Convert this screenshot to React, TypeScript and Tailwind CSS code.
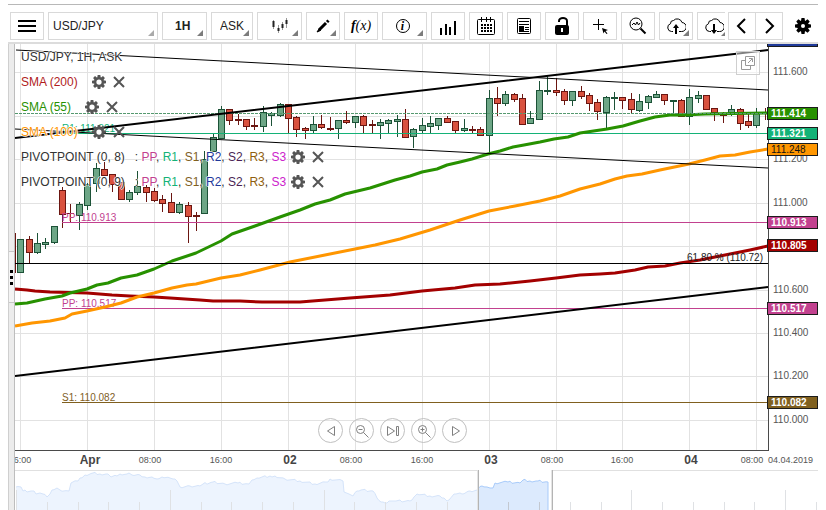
import type { ReactNode } from 'react';

type Point = [number, number];
// up, body top, body bottom, wick top, wick bottom
type Candle = [boolean, number, number, number, number];

const U = true;
const D = false;

const candles: Candle[] = [
  [U, 239, 273, 239, 273], [D, 239, 253, 236, 263], [U, 243, 253, 233, 254], [U, 242, 245, 238, 249],
  [U, 226, 243, 226, 244], [D, 190, 215, 187, 228], [D, 213, 214, 204, 222], [U, 204, 216, 202, 230],
  [U, 184, 206, 183, 210], [U, 168, 184, 163, 192], [D, 169, 176, 162, 176], [D, 174, 185, 174, 192],
  [D, 182, 200, 182, 200], [U, 192, 200, 190, 202], [U, 186, 193, 171, 195], [D, 187, 193, 185, 202],
  [D, 191, 201, 188, 202], [D, 199, 204, 195, 212], [D, 202, 213, 193, 213], [U, 204, 213, 202, 214],
  [D, 205, 217, 202, 243], [D, 215, 217, 212, 231], [U, 159, 214, 151, 214], [U, 137, 152, 134, 152],
  [U, 109, 139, 106, 139], [D, 109, 121, 109, 125], [D, 119, 121, 114, 125], [D, 119, 127, 119, 130],
  [D, 125, 127, 118, 130], [U, 112, 127, 106, 132], [U, 113, 116, 112, 126], [U, 104, 116, 103, 117],
  [D, 104, 119, 104, 133], [D, 117, 130, 116, 137], [D, 128, 131, 127, 139], [U, 124, 131, 116, 133],
  [D, 124, 128, 115, 129], [D, 128, 130, 117, 131], [U, 120, 129, 120, 139], [D, 120, 123, 111, 124],
  [U, 116, 123, 116, 128], [D, 116, 126, 115, 134], [D, 124, 126, 120, 133], [U, 122, 126, 119, 139],
  [U, 120, 124, 119, 133], [U, 119, 122, 115, 137], [D, 119, 138, 109, 138], [U, 129, 137, 128, 148],
  [U, 125, 131, 118, 133], [U, 123, 127, 116, 133], [U, 118, 126, 118, 130], [D, 118, 123, 116, 123],
  [D, 121, 131, 121, 134], [U, 128, 131, 119, 132], [D, 129, 131, 126, 133], [D, 129, 136, 127, 136],
  [U, 98, 136, 90, 153], [D, 98, 104, 87, 116], [U, 94, 104, 91, 106], [D, 94, 100, 93, 102],
  [D, 98, 125, 94, 125], [U, 118, 124, 111, 124], [U, 90, 120, 81, 120], [U, 90, 92, 76, 95],
  [D, 90, 93, 78, 96], [D, 91, 101, 89, 105], [U, 91, 101, 91, 106], [D, 91, 97, 86, 99],
  [D, 95, 104, 93, 111], [D, 102, 112, 99, 120], [U, 97, 113, 96, 128], [U, 97, 99, 92, 110],
  [D, 97, 101, 97, 109], [D, 99, 110, 93, 113], [U, 101, 111, 94, 112], [U, 96, 103, 95, 109],
  [U, 94, 98, 91, 98], [D, 94, 101, 94, 105], [U, 100, 102, 100, 113], [D, 100, 117, 99, 117],
  [U, 97, 117, 89, 125], [U, 95, 99, 91, 103], [D, 95, 110, 95, 110], [D, 108, 113, 108, 121],
  [D, 113, 116, 112, 123], [U, 109, 113, 105, 116], [D, 109, 124, 108, 130], [D, 121, 126, 113, 128],
  [U, 112, 126, 108, 128], [D, 112, 114, 108, 120],
];

const sma200: Point[] = [
  [15, 289], [27, 290], [35, 291], [50, 292], [87, 293], [112, 295], [130, 296], [154, 297], [170, 298],
  [200, 300], [213, 301], [240, 301], [262, 302], [300, 302], [325, 300], [350, 298], [390, 295], [422, 291],
  [455, 288], [475, 285], [500, 284], [530, 281], [556, 278], [580, 275], [600, 274], [615, 273], [635, 270],
  [648, 267], [665, 266], [680, 263], [700, 260], [720, 256], [735, 253], [750, 250], [768, 246],
];
const sma55: Point[] = [
  [15, 304], [27, 303], [45, 299], [62, 296], [70, 293], [87, 289], [97, 285], [108, 283], [121, 278],
  [137, 275], [154, 269], [172, 261], [196, 253], [221, 241], [232, 234], [255, 226], [280, 217], [300, 210],
  [315, 204], [330, 200], [345, 194], [370, 188], [395, 180], [410, 176], [422, 172], [437, 169], [447, 165],
  [460, 162], [472, 159], [488, 154], [500, 151], [513, 147], [524, 145], [540, 142], [554, 139], [568, 137],
  [580, 133], [607, 129], [623, 126], [640, 121], [655, 117], [670, 115], [685, 115], [705, 114], [768, 113],
];
const sma100: Point[] = [
  [15, 326], [32, 323], [50, 321], [65, 318], [72, 314], [87, 311], [105, 307], [121, 303], [137, 297],
  [154, 293], [172, 288], [187, 285], [196, 284], [221, 278], [240, 275], [260, 270], [290, 262], [325, 255],
  [355, 249], [375, 245], [400, 239], [430, 230], [460, 220], [489, 211], [515, 206], [540, 201], [560, 196],
  [580, 189], [600, 184], [615, 179], [627, 176], [642, 174], [660, 170], [689, 164], [705, 160], [720, 156],
  [735, 155], [750, 152], [768, 149],
];

const overview: Point[] = [
  [16, 487], [21, 487], [23, 491], [34, 491], [36, 494], [43, 494], [47, 497], [50, 494], [52, 490], [57, 488],
  [60, 490], [69, 491], [71, 483], [78, 481], [80, 478], [85, 475], [93, 473], [100, 474], [108, 474],
  [111, 477], [117, 476], [120, 474], [127, 474], [129, 473], [132, 475], [140, 475], [145, 477], [152, 477],
  [157, 479], [162, 477], [170, 478], [173, 479], [177, 481], [180, 487], [190, 486], [200, 486], [203, 484],
  [213, 482], [225, 484], [238, 483], [249, 484], [252, 480], [257, 478], [270, 476], [275, 476], [285, 479],
  [300, 481], [315, 484], [325, 482], [328, 482], [330, 479], [343, 481], [344, 492], [349, 494], [353, 496],
  [357, 491], [361, 490], [373, 491], [377, 498], [381, 502], [385, 503], [389, 501], [394, 501], [410, 501],
  [414, 497], [417, 494], [430, 496], [440, 496], [444, 498], [447, 501], [449, 500], [454, 494], [462, 494],
  [470, 491], [478, 490],
];
const selection: Point[] = [
  [478, 489], [482, 486], [487, 487], [490, 488], [493, 488], [495, 483], [508, 482], [520, 483], [523, 480],
  [530, 481], [538, 481], [548, 482],
];

const toLine = (pts: Point[]) => pts.map((p) => p.join(',')).join(' ');

// Splits long segments into short steps so that the overview reads as tick data.
function ragged(pts: Point[]): Point[] {
  const out: Point[] = [];
  pts.forEach(([x, y], i) => {
    out.push([x, y]);
    const next = pts[i + 1];
    if (!next) return;
    for (let sx = x + 2; sx < next[0] - 1; sx += 2) {
      const base = y + ((next[1] - y) * (sx - x)) / (next[0] - x);
      out.push([sx, base + (((sx * 7) % 5) - 2) / 2]);
    }
  });
  return out;
}

const gridX = [20, 87, 154, 221, 288, 355, 422, 489, 556, 622, 689, 756];
const gridY = [72, 116, 159, 203, 246, 290, 333, 376, 420];
const priceTicks: [number, string][] = [
  [72, '111.600'], [159, '111.200'], [203, '111.000'], [290, '110.600'], [333, '110.400'], [376, '110.200'], [420, '110.000'],
];
const timeTicks: [number, string, boolean][] = [
  [20, '16:00', false], [90, 'Apr', true], [150, '08:00', false], [221, '16:00', false], [290, '02', true],
  [351, '08:00', false], [422, '16:00', false], [491, '03', true], [552, '08:00', false], [622, '16:00', false],
  [691, '04', true], [752, '08:00', false],
];
const priceTags: { top: number; label: string; fill: string; dark?: boolean }[] = [
  { top: 34, label: '111.755', fill: '#1f3a9a' },
  { top: 107, label: '111.414', fill: '#279100' },
  { top: 127, label: '111.321', fill: '#14b277' },
  { top: 143, label: '111.248', fill: '#ff9600', dark: true },
  { top: 216, label: '110.913', fill: '#c2418f' },
  { top: 239, label: '110.805', fill: '#a30000' },
  { top: 302, label: '110.517', fill: '#c2418f' },
  { top: 396, label: '110.082', fill: '#80601f' },
];
const pivots: { y: number; label: string; color: string }[] = [
  { y: 133, label: 'R1: 111.321', color: '#14b277' },
  { y: 222, label: 'PP: 110.913', color: '#c2418f' },
  { y: 308, label: 'PP: 110.517', color: '#c2418f' },
  { y: 402, label: 'S1: 110.082', color: '#80601f' },
];

function Chart() {
  return (
    <svg
      viewBox="15 44 803 466"
      className="block h-auto w-full font-['Liberation_Sans',Arial,sans-serif]"
      role="img"
      aria-label="USD/JPY hourly chart"
    >
      {gridX.map((x) => <rect key={x} x={x} y={44} width={1} height={406} fill="#e2e2e2" />)}
      {gridY.map((y) => <rect key={y} x={15} y={y} width={753} height={1} fill="#e2e2e2" />)}

      <rect x={15} y={233} width={1} height={40} fill="#6b1611" />
      {candles.map(([up, top, bottom, high, low], i) => {
        const x = Math.round(20.25 + i * 8.364);
        const edge = up ? '#1c5237' : '#6b1611';
        const width = Math.min(7, 768 - x + 3);
        return (
          <g key={i}>
            <rect x={x} y={high} width={1} height={low - high} fill={edge} />
            <rect x={x - 3} y={top} width={width} height={bottom - top} fill={edge} />
            {bottom - top > 2 && (
              <rect x={x - 2} y={top + 1} width={width - 2} height={bottom - top - 2} fill={up ? '#6da686' : '#d9523f'} />
            )}
          </g>
        );
      })}

      {pivots.map((p) => (
        <g key={p.y} fill={p.color}>
          <rect x={62} y={p.y} width={706} height={1} />
          <text x={62} y={p.y - 1} fontSize={10}>{p.label}</text>
        </g>
      ))}

      <g fill="none" strokeWidth={3} strokeLinejoin="round">
        <polyline points={toLine(sma200)} stroke="#a30000" />
        <polyline points={toLine(sma55)} stroke="#279100" />
        <polyline points={toLine(sma100)} stroke="#ff9600" />
      </g>
      <path d="M15 113.500H768" stroke="#55996f" strokeDasharray="3 1" />

      <g stroke="#000" fill="none">
        <path d="M15 138 768 50M15 376 768 287" strokeWidth={2} />
        <path d="M16 50 768 90M15 129 768 168" strokeWidth={1} />
      </g>
      <rect x={15} y={263} width={753} height={1} fill="#000" />
      <text x={763} y={261} fontSize={10} textAnchor="end" fill="#222">61.80 % (110.72)</text>

      <rect x={768} y={44} width={1} height={407} fill="#4a4a4a" />
      <rect x={15} y={450} width={754} height={1} fill="#4a4a4a" />
      {priceTicks.map(([y, label]) => (
        <text key={label} x={773} y={y + 3} fontSize={10} fill="#555">{label}</text>
      ))}
      {priceTags.map((t) => (
        <g key={t.top}>
          <rect x={767} y={t.top} width={51} height={13} fill="#1c1c1c" />
          <rect x={768} y={t.top + 1} width={49} height={11} fill={t.fill} />
          <text x={771} y={t.top + 10} fontSize={10} fontWeight={t.dark ? 400 : 700} fill={t.dark ? '#111' : '#fff'}>
            {t.label}
          </text>
        </g>
      ))}
      {timeTicks.map(([x, label, major]) => (
        <text
          key={x}
          x={x}
          y={major ? 464 : 463}
          fontSize={major ? 12 : 9}
          fontWeight={major ? 700 : 400}
          textAnchor="middle"
          fill={major ? '#444' : '#555'}
        >
          {label}
        </text>
      ))}
      <text x={768} y={463} fontSize={9} fill="#555">04.04.2019</text>

      <rect x={15} y={470} width={463} height={1} fill="#e0e0e0" />
      <rect x={552} y={470} width={266} height={1} fill="#e0e0e0" />
      <polygon points={`16,510 ${toLine(ragged(overview))} 478,510`} fill="#edf4fe" />
      <polyline points={toLine(ragged(overview))} fill="none" stroke="#d5e4fa" />
      <polygon points={`478,510 ${toLine(ragged(selection))} 548,510`} fill="#dceafd" />
      <polyline points={`${toLine(ragged(selection))} 548,510`} fill="none" stroke="#a8cbfa" />
      {Array.from({ length: 27 }, (_, i) => {
        const x = Math.round(16 + i * 30.77);
        const y = i % 5 === 0 ? 490 : 502;
        return <rect key={i} x={x} y={y} width={1} height={510 - y} fill={x > 478 && x < 551 ? '#c3c8d0' : '#dfe1e4'} />;
      })}
      {[477, 551].map((x) => (
        <g key={x}>
          <rect x={x} y={470} width={2} height={40} fill="#e4e4e4" />
          <rect x={x + 1} y={470} width={1} height={40} fill="#b4b4b4" />
        </g>
      ))}
    </svg>
  );
}

function Gear({ size, hole }: { size: number; hole: number }) {
  return (
    <svg width={size} height={size} viewBox="0 0 16 16" aria-hidden="true">
      <g fill="currentColor">
        {[0, 45, 90, 135].map((a) => (
          <path key={a} d="M6.500 0h3l.5 3v10l-.5 3h-3l-.5-3V3z" transform={`rotate(${a} 8 8)`} />
        ))}
        <circle cx="8" cy="8" r="5.500" />
      </g>
      <circle cx="8" cy="8" r={hole} fill="#fff" />
    </svg>
  );
}

function Corner({ light = false }: { light?: boolean }) {
  return (
    <svg
      className={`pointer-events-none absolute right-[3px] bottom-[3px] ${light ? 'text-[#aaa]' : 'text-[#7c7c7c]'}`}
      width="6"
      height="6"
      viewBox="0 0 6 6"
      aria-hidden="true"
    >
      <path d="M6 0v6H0z" fill="currentColor" />
    </svg>
  );
}

const box = 'relative h-7 shrink-0 border border-[#d9d9d9] bg-white';

function Tool({ label, wide = false, menu = false, children }: { label: string; wide?: boolean; menu?: boolean; children: ReactNode }) {
  return (
    <button type="button" aria-label={label} className={`${box} flex items-center justify-center text-black ${wide ? 'w-[45px]' : 'w-[34px]'}`}>
      {children}
      {menu && <Corner />}
    </button>
  );
}

function Pick({ label, value, width, className, light }: { label: string; value: string; width: string; className: string; light?: boolean }) {
  return (
    <div className={`${box} ${width}`}>
      <select aria-label={label} defaultValue={value} className={`h-full w-full appearance-none bg-transparent text-xs text-[#222] outline-none ${className}`}>
        <option>{value}</option>
      </select>
      <Corner light={light} />
    </div>
  );
}

function Icon({ size = 20, children }: { size?: number; children: ReactNode }) {
  return (
    <svg width={size} height={size} viewBox={`0 0 ${size} ${size}`} fill="none" stroke="currentColor" aria-hidden="true">
      {children}
    </svg>
  );
}

const cloud = 'M7 15.500H5.500a4 4 0 0 1-1-7.800 3 3 0 0 1 3-3.200 5 5 0 0 1 8.500 2 4.500 4.500 0 0 1-.5 9H13';

function Toolbar() {
  return (
    <header className="mt-1 flex border-t border-b-2 border-t-[#b8b8b8] border-b-[#dcdcdc] pt-[7px] pb-[2px] pl-[2px]">
      <div className="flex min-w-0 flex-1 gap-1 overflow-hidden">
        <Tool label="Menu">
          <Icon><path d="M1 5h18M1 10h18M1 15h18" strokeWidth="2" /></Icon>
        </Tool>
        <Pick label="Instrument" value="USD/JPY" width="w-[110px]" className="pl-1" light />
        <Pick label="Period" value="1H" width="w-[45px]" className="pl-3 font-bold" />
        <Pick label="Price side" value="ASK" width="w-[42px]" className="pl-2" />
        <Tool label="Chart type" wide menu>
          <Icon>
            <path d="M3.500 4v9M8.500 9v8M12.500 6v8M16.500 2v10" stroke="#999" />
            <path d="M3.500 5v6M8.500 12v3M12.500 8v4M16.500 4v4" strokeWidth="2" stroke="#222" />
          </Icon>
        </Tool>
        <Tool label="Draw" menu>
          <Icon>
            <path d="M6 14l7-7" strokeWidth="3" />
            <path d="M14 6l1.500-1.500" strokeWidth="3" />
            <path d="M4 16l2-3 1.500 1.500z" fill="currentColor" />
          </Icon>
        </Tool>
        <Tool label="Indicators">
          <span className="font-['Liberation_Serif',serif] text-sm leading-4 italic">
            <b>f</b>(x)
          </span>
        </Tool>
        <Tool label="Information" wide menu>
          <span className="mr-1 flex size-[14px] items-center justify-center rounded-full border border-black font-['Liberation_Serif',serif] text-xs leading-3 font-bold italic">
            i
          </span>
        </Tool>
        <Tool label="Volume">
          <Icon><path d="M3 12v7M8 8v11M12 11v8M17 5v14" strokeWidth="2" /></Icon>
        </Tool>
        <Tool label="Calendar">
          <Icon>
            <rect x="1.500" y="3.500" width="17" height="15" rx="1" />
            <path d="M5.500 1v5M10.500 1v5M14.500 1v5" />
            <path d="M5 9h11M5 12h11M5 15h11" strokeWidth="2" strokeDasharray="2 1" />
          </Icon>
        </Tool>
        <Tool label="News">
          <Icon>
            <rect x="3.500" y="2.500" width="13" height="15" rx="1" />
            <path d="M5 5.500h10M5 8.500h10M11 11.500h4M11 13.500h4M5 15.500h10" />
            <path d="M5 10h5v5H5z" fill="currentColor" stroke="none" />
          </Icon>
        </Tool>
        <Tool label="Unlock">
          <Icon>
            <path d="M7 6V5a4 3 0 0 1 8 0v5" strokeWidth="2" />
            <rect x="3" y="9" width="14" height="10" rx="2" fill="currentColor" stroke="none" />
            <path d="M10 12v4" stroke="#fff" strokeWidth="2" />
          </Icon>
        </Tool>
        <Tool label="Crosshair">
          <Icon>
            <path d="M8.500 3v4M8.500 10v4M3 8.500h4M10 8.500h4M8.500 7v3M7 8.500h3" />
            <path d="M12 12l6 2-2.500 1 2 2.500-1 .5-2-2.500-1 2z" fill="currentColor" stroke="none" />
          </Icon>
        </Tool>
        <Tool label="Search chart">
          <Icon>
            <circle cx="8" cy="8" r="6" />
            <path d="M4 9l2-2 1.500 2L9 6l1.500 3L12 7" />
            <path d="M12.500 12.500l5 5" strokeWidth="2" />
          </Icon>
        </Tool>
        <Tool label="Save to cloud" menu>
          <Icon>
            <path d={cloud} />
            <path d="M10 18v-7" strokeWidth="2" />
            <path d="M10 8l3 4H7z" fill="currentColor" stroke="none" />
          </Icon>
        </Tool>
        <Tool label="Load from cloud" menu>
          <Icon>
            <path d={cloud} />
            <path d="M10 8v7" strokeWidth="2" />
            <path d="M10 18l3-4H7z" fill="currentColor" stroke="none" />
          </Icon>
        </Tool>
      </div>
      <button type="button" aria-label="Scroll left" className={`${box} ml-[3px] flex w-7 items-center justify-center`}>
        <Icon><path d="M13 3l-7 7 7 7" strokeWidth="2" /></Icon>
      </button>
      <button type="button" aria-label="Scroll right" className={`${box} -ml-px flex w-7 items-center justify-center`}>
        <Icon><path d="M7 3l7 7-7 7" strokeWidth="2" /></Icon>
      </button>
      <button type="button" aria-label="Settings" className="flex w-[35px] items-center justify-center pl-1 text-black">
        <Gear size={16} hole={2} />
      </button>
    </header>
  );
}

const pivotLevels: { name: string; color: string }[] = [
  { name: 'PP', color: 'text-[#c2418f]' },
  { name: 'R1', color: 'text-[#14b277]' },
  { name: 'S1', color: 'text-[#80601f]' },
  { name: 'R2', color: 'text-[#1f3a9a]' },
  { name: 'S2', color: 'text-[#4b1f55]' },
  { name: 'R3', color: 'text-[#8f5f10]' },
  { name: 'S3', color: 'text-[#cc22cc]' },
];

function LegendRow({ name, gap, children }: { name: string; gap: string; children: ReactNode }) {
  return (
    <li className={`flex h-[25px] items-center ${gap}`}>
      <span className="whitespace-pre [text-shadow:1px_0_#fffc,-1px_0_#fffc,0_1px_#fffc,0_-1px_#fffc]">{children}</span>
      <span className="flex items-center gap-[6px] text-[#555]">
        <button type="button" aria-label={`${name} settings`}><Gear size={14} hole={3} /></button>
        <button type="button" aria-label={`Remove ${name}`}>
          <Icon size={14}><path d="M2 2l10 10M12 2L2 12" strokeWidth="2" /></Icon>
        </button>
      </span>
    </li>
  );
}

function PivotRow({ name }: { name: string }) {
  return (
    <LegendRow name={name} gap="gap-[5px]">
      {name}
      {'   : '}
      {pivotLevels.map((l, i) => (
        <span key={l.name}>
          {i > 0 && ', '}
          <span className={l.color}>{l.name}</span>
        </span>
      ))}
    </LegendRow>
  );
}

function Legend() {
  return (
    <ul className="absolute top-0 left-[6px] text-xs text-[#333]">
      <li className="flex h-[25px] items-center">
        <span className="[text-shadow:1px_0_#fffc,-1px_0_#fffc,0_1px_#fffc,0_-1px_#fffc]">USD/JPY, 1H, ASK</span>
      </li>
      <LegendRow name="SMA (200)" gap="gap-[14px]"><span className="text-[#b01c1c]">SMA (200)</span></LegendRow>
      <LegendRow name="SMA (55)" gap="gap-[14px]"><span className="text-[#279100]">SMA (55)</span></LegendRow>
      <LegendRow name="SMA (100)" gap="gap-[14px]"><span className="text-[#ff9600]">SMA (100)</span></LegendRow>
      <PivotRow name="PIVOTPOINT (0, 8)" />
      <PivotRow name="PIVOTPOINT (0, 9)" />
    </ul>
  );
}

const navButtons: { label: string; icon: ReactNode }[] = [
  { label: 'Back', icon: <path d="M10.500 2.500v9L3.500 7z" /> },
  {
    label: 'Zoom out',
    icon: <><circle cx="5.500" cy="5.500" r="4" /><path d="M3.500 5.500h4M8.500 8.500l5 5" /></>,
  },
  { label: 'Latest', icon: <path d="M1.500 2.500v9L8.500 7zM10.500 2.500h2v9h-2z" /> },
  {
    label: 'Zoom in',
    icon: <><circle cx="5.500" cy="5.500" r="4" /><path d="M3.500 5.500h4M5.500 3.500v4M8.500 8.500l5 5" /></>,
  },
  { label: 'Forward', icon: <path d="M4.500 2.500v9L11.500 7z" /> },
];

export default function App() {
  return (
    <div className="mx-2 flow-root bg-white font-['Liberation_Sans',Arial,sans-serif]">
      <Toolbar />
      <main className="flex">
        <aside className="flex w-[7px] shrink-0 items-center border-x border-l-[#cfcfcf] border-r-[#bdbdbd] bg-[#ececec]">
          <button
            type="button"
            aria-label="Toggle side panel"
            className="flex h-[52px] w-full flex-col items-center justify-center gap-[3px] border-y border-[#c8c8c8] bg-[#f4f4f4]"
          >
            <i className="size-[3px] bg-black" />
            <i className="size-[3px] bg-black" />
            <i className="size-[3px] bg-black" />
          </button>
        </aside>
        <div className="relative min-w-0 flex-1">
          <Chart />
          <Legend />
          <button
            type="button"
            aria-label="Open in new window"
            className="absolute top-[7px] right-[58px] flex size-6 items-center justify-center border border-[#cfcfcf] bg-white/50 text-[#999]"
          >
            <Icon size={16}>
              <path d="M5.500 1.500h9v9h-9zM5 5.500H1.500v9h9V11M8 8l4-4M9 3.500h3.500V7" />
            </Icon>
          </button>
          <nav aria-label="Chart navigation" className="absolute inset-x-0 bottom-[67px] flex justify-center gap-[6px] pr-12">
            {navButtons.map((b) => (
              <button
                key={b.label}
                type="button"
                aria-label={b.label}
                className="flex size-[25px] items-center justify-center rounded-full border border-[#c0c0c0] text-[#808080]"
              >
                <Icon size={14}>{b.icon}</Icon>
              </button>
            ))}
          </nav>
        </div>
      </main>
    </div>
  );
}
